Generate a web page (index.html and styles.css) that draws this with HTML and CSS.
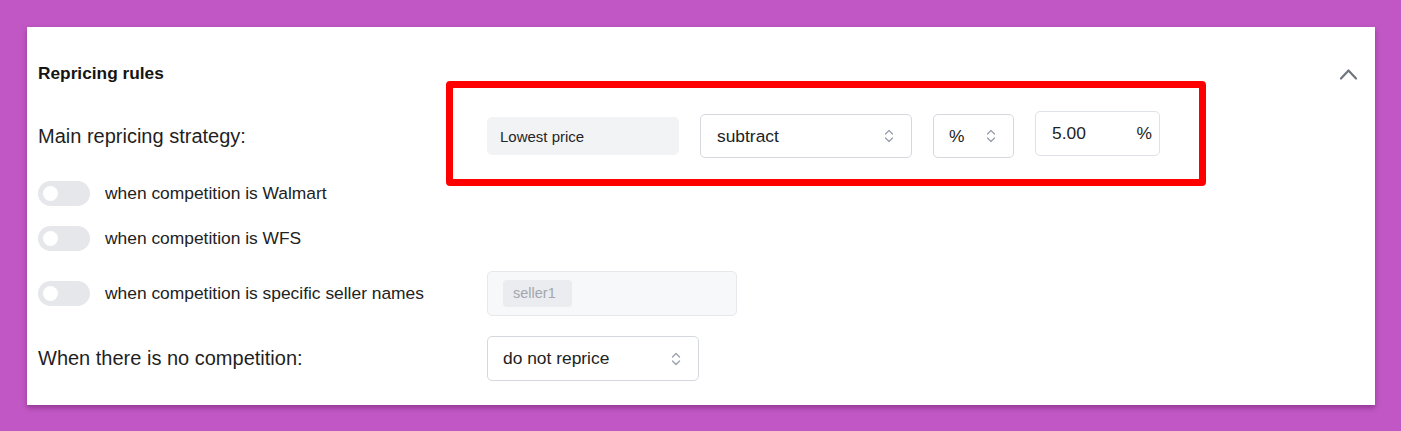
FILE: index.html
```html
<!DOCTYPE html>
<html lang="en">
<head>
    <meta charset="UTF-8">
    <meta name="viewport" content="width=device-width, initial-scale=1.0">
    <title>Repricing rules</title>
    <link rel="stylesheet" href="styles.css">
</head>
<body>

    <div class="card">
        <!-- Header -->
        <div class="card-header">
            <h3>Repricing rules</h3>
            <svg class="collapse" width="19" height="12" viewBox="0 0 19 12">
                <polyline points="2,10.5 9.5,2.5 17,10.5" fill="none" stroke="#6f757e" stroke-width="2.2" stroke-linecap="round" stroke-linejoin="round"/>
            </svg>
        </div>

        <!-- Main strategy -->
        <div class="form-row strategy">
            <label class="label">Main repricing strategy:</label>
            <div class="fields">
                <div class="static-field">Lowest price</div>
                <div class="select select-action">
                    <span>subtract</span>
                    <svg class="updown" width="10" height="14" viewBox="0 0 10 14"><path d="M1.5 5 L5 1.5 L8.5 5 M1.5 9 L5 12.5 L8.5 9" fill="none" stroke="#9ca3af" stroke-width="1.4" stroke-linecap="round" stroke-linejoin="round"/></svg>
                </div>
                <div class="select select-unit">
                    <span>%</span>
                    <svg class="updown" width="10" height="14" viewBox="0 0 10 14"><path d="M1.5 5 L5 1.5 L8.5 5 M1.5 9 L5 12.5 L8.5 9" fill="none" stroke="#9ca3af" stroke-width="1.4" stroke-linecap="round" stroke-linejoin="round"/></svg>
                </div>
                <div class="amount">
                    <span>5.00</span>
                    <span>%</span>
                </div>
            </div>
        </div>

        <!-- Competition toggles -->
        <div class="toggle-row first">
            <span class="toggle"></span>
            <span class="toggle-label">when competition is Walmart</span>
        </div>
        <div class="toggle-row">
            <span class="toggle"></span>
            <span class="toggle-label">when competition is WFS</span>
        </div>
        <div class="form-row sellers">
            <div class="toggle-row inline">
                <span class="toggle"></span>
                <span class="toggle-label">when competition is specific seller names</span>
            </div>
            <div class="tag-input">
                <span class="tag">seller1</span>
            </div>
        </div>

        <!-- No competition -->
        <div class="form-row fallback">
            <label class="label">When there is no competition:</label>
            <div class="select select-fallback">
                <span>do not reprice</span>
                <svg class="updown" width="10" height="14" viewBox="0 0 10 14"><path d="M1.5 5 L5 1.5 L8.5 5 M1.5 9 L5 12.5 L8.5 9" fill="none" stroke="#9ca3af" stroke-width="1.4" stroke-linecap="round" stroke-linejoin="round"/></svg>
            </div>
        </div>
    </div>

</body>
</html>
```

FILE: styles.css
```css
body {
    font-family: "Liberation Sans", Arial, sans-serif;
    background-color: #c157c4;
    color: #222;
    margin: 0;
    padding: 27px 26px 26px 27px;
}
.card {
    background: white;
    padding: 32px 17px 24px 11px;
    box-shadow: 0 3px 5px rgba(60, 0, 60, 0.35);
}
.card-header {
    display: flex;
    justify-content: space-between;
    align-items: center;
    height: 28px;
}
.card-header h3 {
    margin: 0;
    font-size: 17.3px;
    font-weight: bold;
    color: #151515;
}
.collapse {
    margin-top: 1px;
}
.form-row {
    display: grid;
    grid-template-columns: 449px 1fr;
    align-items: center;
}
.label {
    font-size: 20px;
    color: #1f1f1f;
}
.strategy {
    margin-top: 24px;
    height: 50px;
}
.fields {
    position: relative;
    display: flex;
    align-items: center;
    gap: 21px;
    height: 50px;
}
/* red highlight drawn over the strategy fields */
.fields::after {
    content: "";
    position: absolute;
    top: -30px;
    bottom: -25px;
    left: -41px;
    width: 760px;
    border: 7px solid #ff0000;
    border-radius: 4px;
    box-sizing: border-box;
    pointer-events: none;
}
.static-field {
    width: 192px;
    height: 38px;
    box-sizing: border-box;
    padding-left: 13px;
    display: flex;
    align-items: center;
    background-color: #f2f3f5;
    border-radius: 5px;
    font-size: 15px;
    color: #262626;
}
.select {
    height: 44px;
    box-sizing: border-box;
    display: flex;
    align-items: center;
    justify-content: space-between;
    padding: 0 17px 0 16px;
    border: 1px solid #d5d9df;
    border-radius: 5px;
    font-size: 17.4px;
    color: #222;
}
.select-action {
    width: 212px;
}
.select-unit {
    width: 81px;
    padding-left: 15px;
}
.select-fallback {
    width: 212px;
    height: 45px;
    padding-left: 15px;
}
.amount {
    width: 125px;
    height: 45px;
    align-self: flex-start;
    box-sizing: border-box;
    display: flex;
    align-items: center;
    justify-content: space-between;
    padding: 0 7px 0 16px;
    border: 1px solid #dfe2e6;
    border-radius: 5px;
    font-size: 17.4px;
}
.toggle-row {
    display: flex;
    align-items: center;
    gap: 15px;
    height: 30px;
    margin-top: 15px;
}
.toggle-row.first {
    margin-top: 17px;
}
.toggle-row.inline {
    margin-top: 0;
}
.toggle {
    position: relative;
    width: 52px;
    height: 25px;
    border-radius: 13px;
    background-color: #e5e7eb;
    flex-shrink: 0;
}
.toggle::before {
    content: "";
    position: absolute;
    left: 5px;
    top: 5px;
    width: 15px;
    height: 15px;
    border-radius: 50%;
    background: white;
}
.toggle-label {
    font-size: 17.4px;
    color: #222;
}
.sellers {
    margin-top: 18px;
}
.tag-input {
    width: 250px;
    height: 45px;
    box-sizing: border-box;
    padding: 8px 15px;
    background-color: #f7f8fa;
    border: 1px solid #e6e8eb;
    border-radius: 5px;
}
.tag {
    display: inline-block;
    height: 27px;
    line-height: 27px;
    padding: 0 16px 0 10px;
    background-color: #eaecef;
    border-radius: 4px;
    font-size: 14.5px;
    color: #a3a7ad;
}
.fallback {
    margin-top: 20px;
}
```
